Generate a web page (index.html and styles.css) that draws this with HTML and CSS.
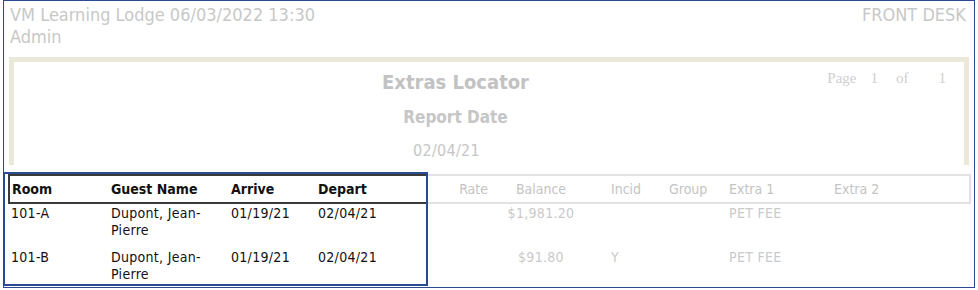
FILE: index.html
```html
<!DOCTYPE html>
<html lang="en">
<head>
  <meta charset="UTF-8" />
  <title>Extras Locator</title>
  <link rel="stylesheet" href="styles.css">
</head>
<body>
  <div class="frame">
    <div class="topbar">
      <div class="who">VM Learning Lodge 06/03/2022 13:30<br>Admin</div>
      <div class="desk">FRONT DESK</div>
    </div>

    <!-- report title block -->
    <div class="report-head">
      <div class="titles">
        <div class="title">Extras Locator</div>
        <div class="subtitle">Report Date</div>
        <div class="report-date">02/04/21</div>
      </div>
      <div class="paging">
        <span>Page</span><span class="pg-num">1</span><span class="pg-of">of</span><span class="pg-total">1</span>
      </div>
    </div>

    <div class="grid-wrap">
      <table class="grid">
        <colgroup>
          <col style="width: 98px">
          <col style="width: 120px">
          <col style="width: 87px">
          <col style="width: 114px">
          <col style="width: 68px">
          <col style="width: 90px">
          <col style="width: 70px">
          <col style="width: 69px">
          <col style="width: 105px">
          <col style="width: 140px">
        </colgroup>
        <thead>
          <tr>
            <th class="focus first">Room</th>
            <th class="focus">Guest Name</th>
            <th class="focus">Arrive</th>
            <th class="focus">Depart</th>
            <th class="num">Rate</th>
            <th class="mid">Balance</th>
            <th class="incid">Incid</th>
            <th class="grp">Group</th>
            <th>Extra 1</th>
            <th class="last">Extra 2</th>
          </tr>
        </thead>
        <tbody>
          <tr>
            <td class="focus">101-A</td>
            <td class="focus">Dupont, Jean-Pierre</td>
            <td class="focus">01/19/21</td>
            <td class="focus">02/04/21</td>
            <td class="num"></td>
            <td class="mid">$1,981.20</td>
            <td class="incid"></td>
            <td class="grp"></td>
            <td>PET FEE</td>
            <td></td>
          </tr>
          <tr>
            <td class="focus">101-B</td>
            <td class="focus">Dupont, Jean-Pierre</td>
            <td class="focus">01/19/21</td>
            <td class="focus">02/04/21</td>
            <td class="num"></td>
            <td class="mid">$91.80</td>
            <td class="incid">Y</td>
            <td class="grp"></td>
            <td>PET FEE</td>
            <td></td>
          </tr>
        </tbody>
      </table>
      <div class="highlight"></div>
    </div>
  </div>
</body>
</html>
```

FILE: styles.css
```css
* {
  margin: 0;
  padding: 0;
  box-sizing: border-box;
}

body {
  background: #ffffff;
  font-family: "DejaVu Sans Condensed", "DejaVu Sans", sans-serif;
  font-stretch: condensed;
  color: #c6c6c6;
}

.frame {
  position: relative;
  width: 972px;
  height: 288px;
  margin-left: 3px;
  border: 1px solid #2a4a92;
  overflow: hidden;
}

/* top line: property, user, desk */
.topbar {
  display: flex;
  justify-content: space-between;
  padding: 3px 8px 0 6px;
  font-size: 18px;
  line-height: 22px;
  height: 56px;
  color: #c8c8c8;
}

.report-head {
  display: grid;
  grid-template-columns: 1fr 77px;
  height: 108px;
  margin: 0 5px;
  border: 5px solid #eae8d8;
  border-bottom: none;
}

.titles {
  grid-column: 1;
  grid-row: 1;
  text-align: center;
  padding: 8px 0 0 10px;
}

.title {
  font-size: 20px;
  font-weight: bold;
  line-height: 25px;
  color: #c2c2c2;
}

.subtitle {
  margin-top: 11px;
  font-size: 17px;
  font-weight: bold;
  line-height: 22px;
  color: #c6c6c6;
}

.report-date {
  margin: 12px 18px 0 0;
  font-size: 16px;
  line-height: 22px;
  letter-spacing: 0.3px;
}

.paging {
  grid-column: 1 / span 2;
  grid-row: 1;
  justify-self: end;
  align-self: start;
  display: flex;
  margin: 7px 18px 0 0;
  font-family: "Liberation Serif", serif;
  font-size: 15px;
  line-height: 18px;
  color: #cfcfcf;
}

.pg-num { margin-left: 14px; }
.pg-of { margin-left: 18px; }
.pg-total { margin-left: 30px; }

/* detail grid */
.grid-wrap {
  position: relative;
  margin: 9px 0 0 4px;
}

.grid {
  width: 961px;
  table-layout: fixed;
  border-collapse: collapse;
  font-size: 14px;
  line-height: 17px;
}

.grid th {
  text-align: left;
  font-weight: normal;
  padding: 5px 4px 4px;
  border-top: 2px solid #e2e2e2;
  border-bottom: 2px solid #e2e2e2;
  color: #c4c4c4;
}

.grid th.last {
  border-right: 2px solid #e2e2e2;
}

.grid th.focus {
  font-weight: bold;
  color: #111111;
  border-top-color: #3a3a3a;
  border-bottom-color: #3a3a3a;
}

.grid th.first {
  border-left: 2px solid #3a3a3a;
  padding-left: 2px;
}

.grid td {
  vertical-align: top;
  padding: 1px 4px 9px;
  letter-spacing: 0.3px;
  color: #cacaca;
}

.grid td:first-child {
  padding-left: 2px;
}

.grid td.focus {
  color: #111111;
}

.grid .num {
  text-align: right;
  padding-right: 8px;
}

.grid .mid {
  text-align: center;
}

.grid .incid {
  padding-left: 25px;
}

.grid .grp {
  padding-left: 13px;
}

/* selection box drawn over the guest columns */
.highlight {
  position: absolute;
  left: -5px;
  top: -2px;
  width: 425px;
  height: 114px;
  border: 2px solid #2a4a92;
  pointer-events: none;
}
```
